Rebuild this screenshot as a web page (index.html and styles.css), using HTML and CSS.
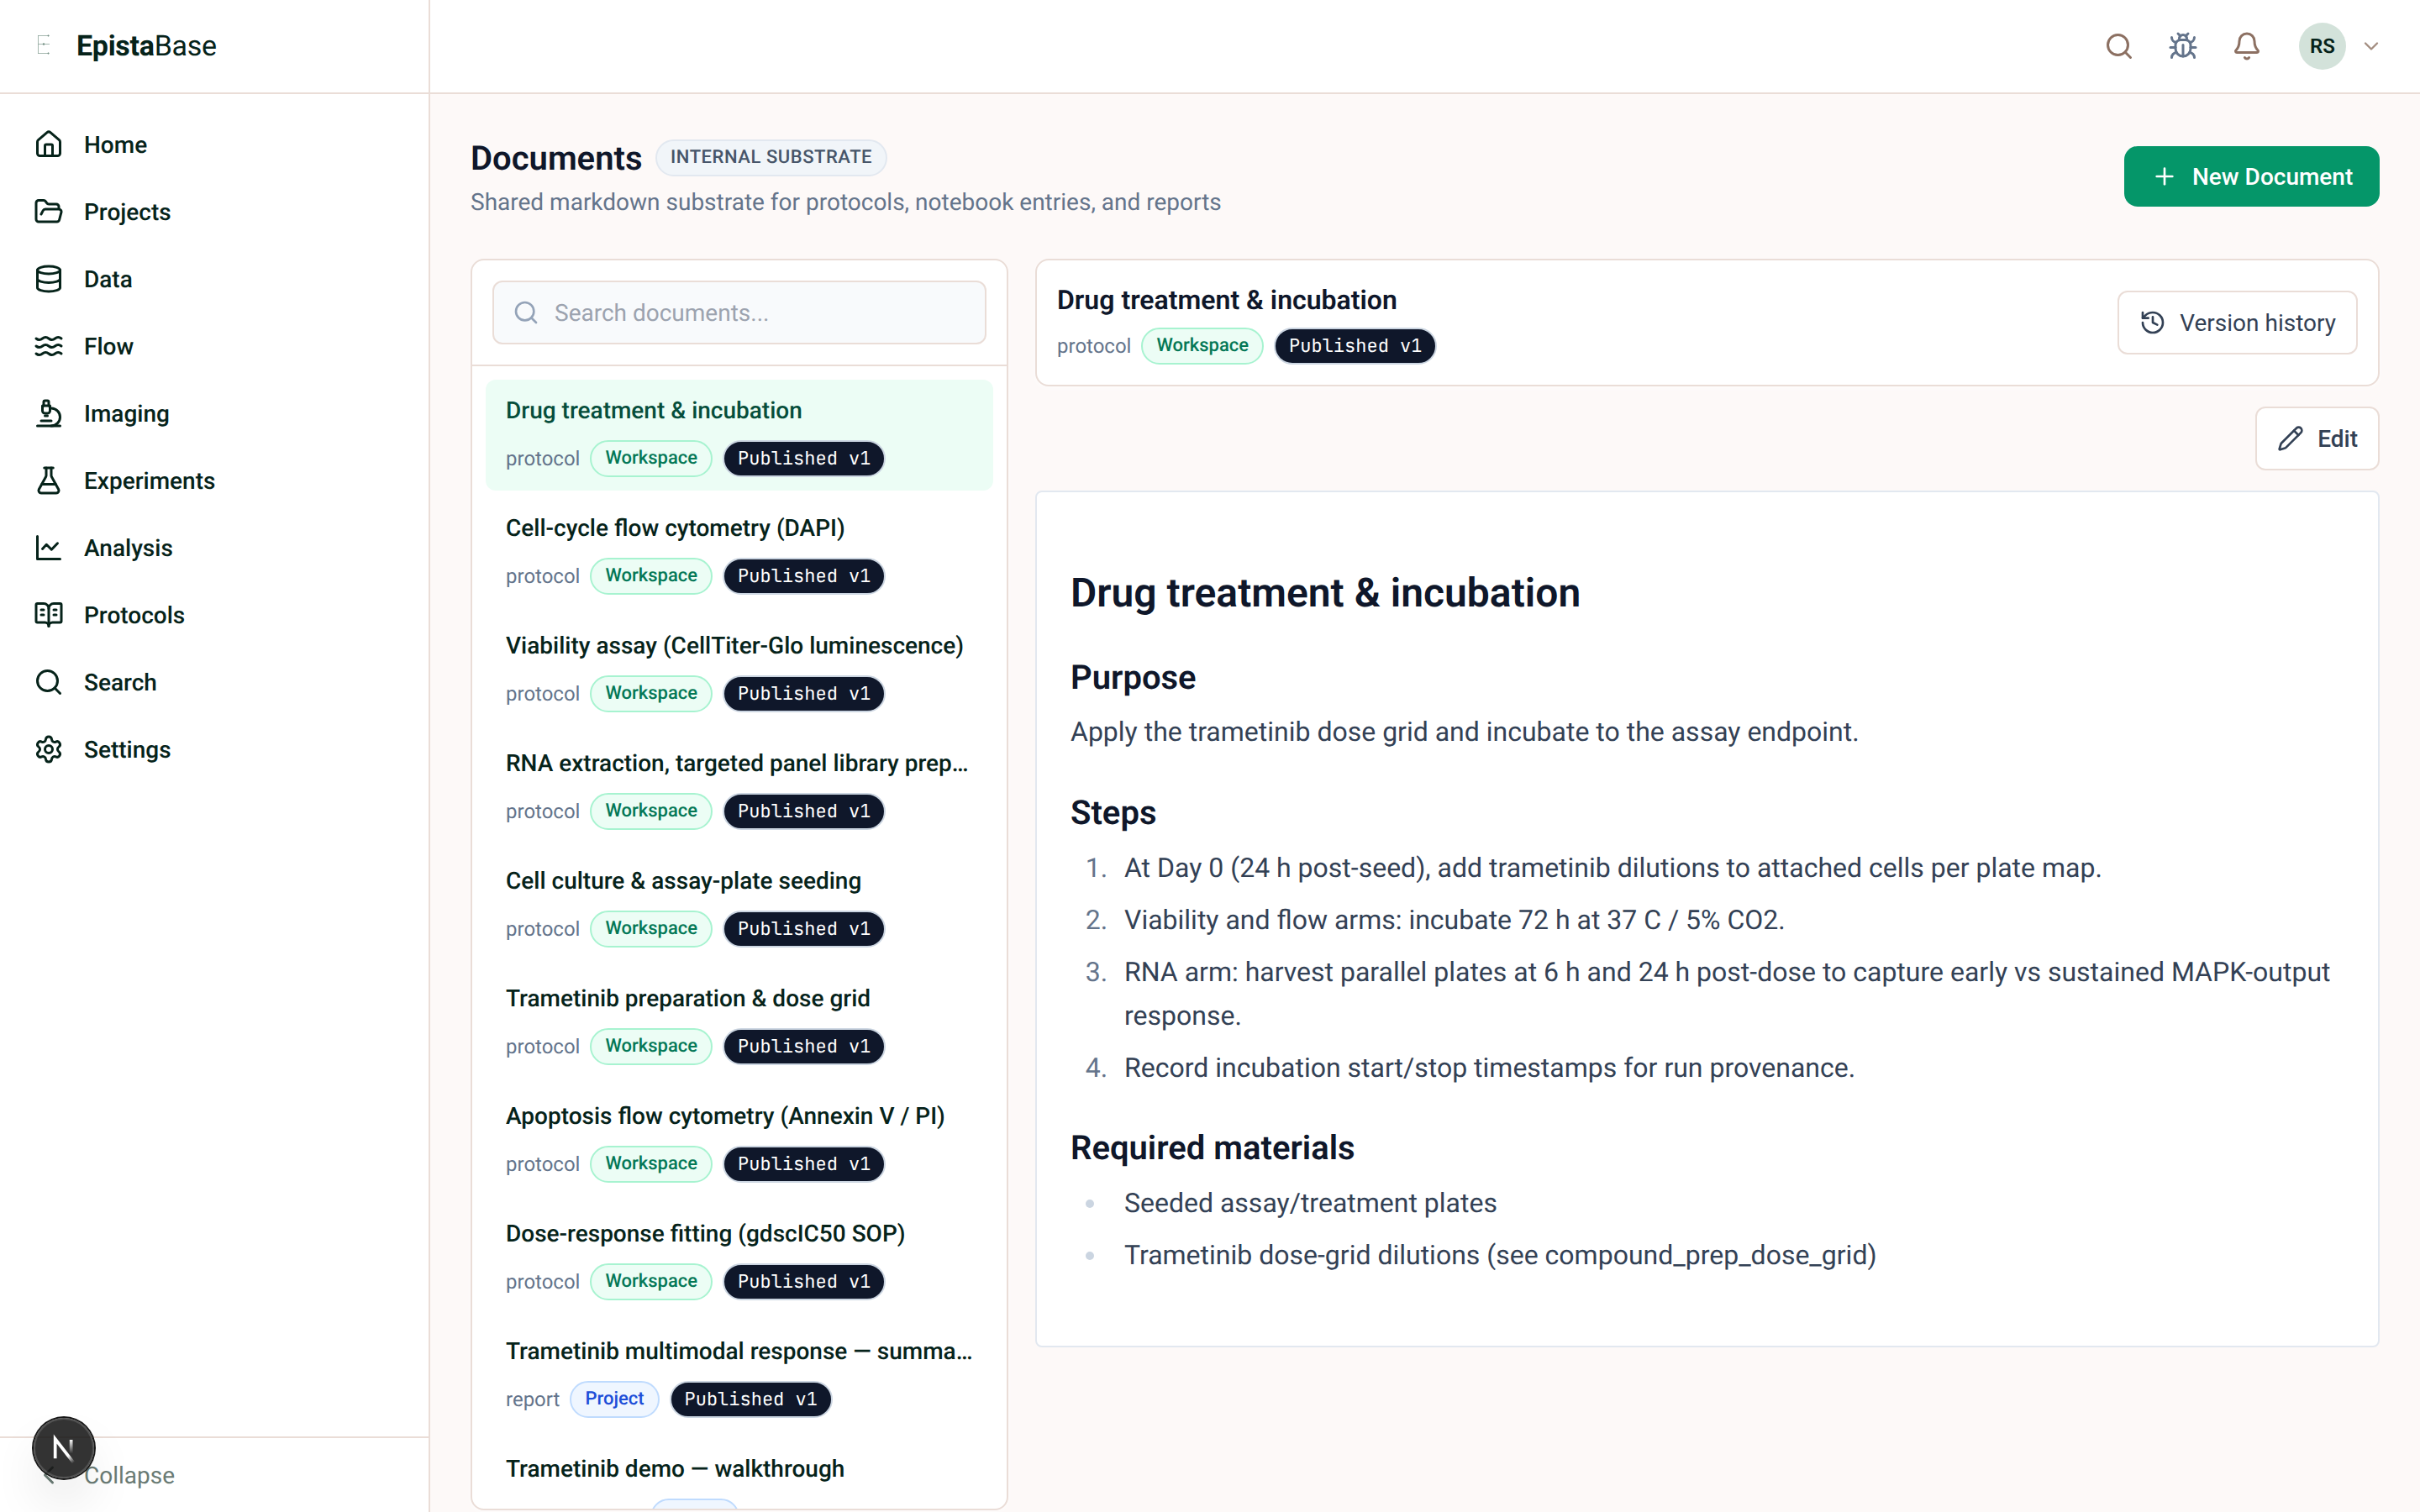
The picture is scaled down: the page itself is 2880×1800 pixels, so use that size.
FILE: index.html
```html
<!DOCTYPE html>
<html lang="en">
<head>
    <meta charset="UTF-8">
    <meta name="viewport" content="width=device-width, initial-scale=1.0">
    <title>Documents - EpistaBase</title>
    <link rel="stylesheet" href="styles.css">
</head>
<body>
    <!-- Shared icon shapes -->
    <svg class="sprite" xmlns="http://www.w3.org/2000/svg">
        <symbol id="i-search" viewBox="0 0 24 24"><circle cx="11" cy="11" r="8"/><path d="m21 21-4.3-4.3"/></symbol>
    </svg>

    <aside id="sidebar">
        <div class="brand">
            <svg class="brand-mark" viewBox="0 0 16 24">
                <path d="M1.5 1v22M1 1.5h13M1 11.5h14M1 22.5h13"/>
                <circle cx="8" cy="11.5" r="1"/><circle cx="13.5" cy="1.5" r=".8"/><circle cx="13.5" cy="22.5" r=".8"/>
            </svg>
            <span class="brand-name"><strong>Epista</strong>Base</span>
        </div>
        <nav class="nav">
            <a class="nav-item"><svg class="icon" viewBox="0 0 24 24"><path d="M15 21v-8a1 1 0 0 0-1-1h-4a1 1 0 0 0-1 1v8"/><path d="M3 10a2 2 0 0 1 .709-1.528l7-5.999a2 2 0 0 1 2.582 0l7 5.999A2 2 0 0 1 21 10v9a2 2 0 0 1-2 2H5a2 2 0 0 1-2-2z"/></svg>Home</a>
            <a class="nav-item"><svg class="icon" viewBox="0 0 24 24"><path d="m6 14 1.5-2.9A2 2 0 0 1 9.24 10H20a2 2 0 0 1 1.94 2.5l-1.54 6a2 2 0 0 1-1.95 1.5H4a2 2 0 0 1-2-2V5a2 2 0 0 1 2-2h3.9a2 2 0 0 1 1.69.9l.81 1.2a2 2 0 0 0 1.67.9H18a2 2 0 0 1 2 2v2"/></svg>Projects</a>
            <a class="nav-item"><svg class="icon" viewBox="0 0 24 24"><ellipse cx="12" cy="5" rx="9" ry="3"/><path d="M3 5v14a9 3 0 0 0 18 0V5"/><path d="M3 12a9 3 0 0 0 18 0"/></svg>Data</a>
            <a class="nav-item"><svg class="icon" viewBox="0 0 24 24"><path d="M2 6c.6.5 1.2 1 2.5 1C7 7 7 5 9.5 5c2.6 0 2.4 2 5 2 2.5 0 2.5-2 5-2 1.3 0 1.9.5 2.5 1"/><path d="M2 12c.6.5 1.2 1 2.5 1 2.5 0 2.5-2 5-2 2.6 0 2.4 2 5 2 2.5 0 2.5-2 5-2 1.3 0 1.9.5 2.5 1"/><path d="M2 18c.6.5 1.2 1 2.5 1 2.5 0 2.5-2 5-2 2.6 0 2.4 2 5 2 2.5 0 2.5-2 5-2 1.3 0 1.9.5 2.5 1"/></svg>Flow</a>
            <a class="nav-item"><svg class="icon" viewBox="0 0 24 24"><path d="M6 18h8"/><path d="M3 22h18"/><path d="M14 22a7 7 0 1 0 0-14h-1"/><path d="M9 14h2"/><path d="M9 12a2 2 0 0 1-2-2V6h6v4a2 2 0 0 1-2 2Z"/><path d="M12 6V3a1 1 0 0 0-1-1H9a1 1 0 0 0-1 1v3"/></svg>Imaging</a>
            <a class="nav-item"><svg class="icon" viewBox="0 0 24 24"><path d="M14 2v6a2 2 0 0 0 .245.96l5.51 10.08A2 2 0 0 1 18 22H6a2 2 0 0 1-1.755-2.96l5.51-10.08A2 2 0 0 0 10 8V2"/><path d="M6.453 15h11.094"/><path d="M8.5 2h7"/></svg>Experiments</a>
            <a class="nav-item"><svg class="icon" viewBox="0 0 24 24"><path d="M3 3v18h18"/><path d="m7 13 3.2-3.5 4 4L19 8.5"/></svg>Analysis</a>
            <a class="nav-item"><svg class="icon" viewBox="0 0 24 24"><path d="M12 7v14"/><path d="M16 12h2"/><path d="M16 8h2"/><path d="M3 18a1 1 0 0 1-1-1V4a1 1 0 0 1 1-1h5a4 4 0 0 1 4 4 4 4 0 0 1 4-4h5a1 1 0 0 1 1 1v13a1 1 0 0 1-1 1h-6a3 3 0 0 0-3 3 3 3 0 0 0-3-3z"/><path d="M6 12h2"/><path d="M6 8h2"/></svg>Protocols</a>
            <a class="nav-item"><svg class="icon"><use href="#i-search"/></svg>Search</a>
            <a class="nav-item"><svg class="icon" viewBox="0 0 24 24"><path d="M9.671 4.136a2.34 2.34 0 0 1 4.659 0 2.34 2.34 0 0 0 3.319 1.915 2.34 2.34 0 0 1 2.33 4.033 2.34 2.34 0 0 0 0 3.831 2.34 2.34 0 0 1-2.33 4.033 2.34 2.34 0 0 0-3.319 1.915 2.34 2.34 0 0 1-4.659 0 2.34 2.34 0 0 0-3.32-1.915 2.34 2.34 0 0 1-2.33-4.033 2.34 2.34 0 0 0 0-3.831A2.34 2.34 0 0 1 6.35 6.051a2.34 2.34 0 0 0 3.319-1.915"/><circle cx="12" cy="12" r="3"/></svg>Settings</a>
        </nav>
        <div class="collapse"><svg class="icon" viewBox="0 0 24 24"><path d="m15 18-6-6 6-6"/></svg>Collapse</div>
    </aside>

    <div id="page">
        <header class="topbar">
            <svg class="icon" viewBox="0 0 24 24"><use href="#i-search"/></svg>
            <svg class="icon icon-bug" viewBox="0 0 24 24"><path d="m8 2 1.88 1.88"/><path d="M14.12 3.88 16 2"/><path d="M9 7.13v-1a3.003 3.003 0 1 1 6 0v1"/><path d="M12 20c-3.3 0-6-2.7-6-6v-3a4 4 0 0 1 4-4h4a4 4 0 0 1 4 4v3c0 3.3-2.7 6-6 6"/><path d="M12 20v-9"/><path d="M6.53 9C4.6 8.8 3 7.1 3 5"/><path d="M6 13H2"/><path d="M3 21c0-2.1 1.7-3.9 3.8-4"/><path d="M20.97 5c0 2.1-1.6 3.8-3.5 4"/><path d="M22 13h-4"/><path d="M17.2 17c2.1.1 3.8 1.9 3.8 4"/></svg>
            <svg class="icon" viewBox="0 0 24 24"><path d="M10.268 21a2 2 0 0 0 3.464 0"/><path d="M3.262 15.326A1 1 0 0 0 4 17h16a1 1 0 0 0 .74-1.673C19.41 13.956 18 12.499 18 8A6 6 0 0 0 6 8c0 4.499-1.411 5.956-2.738 7.326"/></svg>
            <div class="user">
                <span class="avatar">RS</span>
                <svg class="icon icon-chevron" viewBox="0 0 24 24"><path d="m6 9 6 6 6-6"/></svg>
            </div>
        </header>

        <main class="content">
            <div class="page-head">
                <div>
                    <div class="page-title"><h1>Documents</h1><span class="badge badge-tag">Internal substrate</span></div>
                    <p class="subtitle">Shared markdown substrate for protocols, notebook entries, and reports</p>
                </div>
                <button class="btn btn-primary"><svg class="icon" viewBox="0 0 24 24"><path d="M5 12h14"/><path d="M12 5v14"/></svg>New Document</button>
            </div>

            <div class="columns">
                <section class="doc-list">
                    <div class="search-wrap">
                        <div class="search"><svg class="icon"><use href="#i-search"/></svg>Search documents...</div>
                    </div>
                    <div class="items">
                        <div class="item active">
                            <div class="item-title">Drug treatment &amp; incubation</div>
                            <div class="meta">protocol<span class="badge badge-workspace">Workspace</span><span class="badge badge-published">Published v1</span></div>
                        </div>
                        <div class="item">
                            <div class="item-title">Cell-cycle flow cytometry (DAPI)</div>
                            <div class="meta">protocol<span class="badge badge-workspace">Workspace</span><span class="badge badge-published">Published v1</span></div>
                        </div>
                        <div class="item">
                            <div class="item-title">Viability assay (CellTiter-Glo luminescence)</div>
                            <div class="meta">protocol<span class="badge badge-workspace">Workspace</span><span class="badge badge-published">Published v1</span></div>
                        </div>
                        <div class="item">
                            <div class="item-title">RNA extraction, targeted panel library prep &amp; sequencing</div>
                            <div class="meta">protocol<span class="badge badge-workspace">Workspace</span><span class="badge badge-published">Published v1</span></div>
                        </div>
                        <div class="item">
                            <div class="item-title">Cell culture &amp; assay-plate seeding</div>
                            <div class="meta">protocol<span class="badge badge-workspace">Workspace</span><span class="badge badge-published">Published v1</span></div>
                        </div>
                        <div class="item">
                            <div class="item-title">Trametinib preparation &amp; dose grid</div>
                            <div class="meta">protocol<span class="badge badge-workspace">Workspace</span><span class="badge badge-published">Published v1</span></div>
                        </div>
                        <div class="item">
                            <div class="item-title">Apoptosis flow cytometry (Annexin V / PI)</div>
                            <div class="meta">protocol<span class="badge badge-workspace">Workspace</span><span class="badge badge-published">Published v1</span></div>
                        </div>
                        <div class="item">
                            <div class="item-title">Dose-response fitting (gdscIC50 SOP)</div>
                            <div class="meta">protocol<span class="badge badge-workspace">Workspace</span><span class="badge badge-published">Published v1</span></div>
                        </div>
                        <div class="item">
                            <div class="item-title">Trametinib multimodal response — summary report</div>
                            <div class="meta">report<span class="badge badge-project">Project</span><span class="badge badge-published">Published v1</span></div>
                        </div>
                        <div class="item">
                            <div class="item-title">Trametinib demo — walkthrough</div>
                            <div class="meta">notebook entry<span class="badge badge-project">Project</span></div>
                        </div>
                    </div>
                </section>

                <section class="doc-view">
                    <div class="doc-head">
                        <div>
                            <h2>Drug treatment &amp; incubation</h2>
                            <div class="meta">protocol<span class="badge badge-workspace">Workspace</span><span class="badge badge-published">Published v1</span></div>
                        </div>
                        <button class="btn btn-outline"><svg class="icon" viewBox="0 0 24 24"><path d="M3 12a9 9 0 1 0 9-9 9.75 9.75 0 0 0-6.74 2.74L3 8"/><path d="M3 3v5h5"/><path d="M12 7v5l4 2"/></svg>Version history</button>
                    </div>
                    <button class="btn btn-outline btn-edit"><svg class="icon" viewBox="0 0 24 24"><path d="M21.174 6.812a1 1 0 0 0-3.986-3.987L3.842 16.174a2 2 0 0 0-.5.83l-1.321 4.352a.5.5 0 0 0 .623.622l4.353-1.32a2 2 0 0 0 .83-.497z"/><path d="m15 5 4 4"/></svg>Edit</button>
                    <article class="prose">
                        <h1>Drug treatment &amp; incubation</h1>
                        <h2>Purpose</h2>
                        <p>Apply the trametinib dose grid and incubate to the assay endpoint.</p>
                        <h2>Steps</h2>
                        <ol>
                            <li>At Day 0 (24 h post-seed), add trametinib dilutions to attached cells per plate map.</li>
                            <li>Viability and flow arms: incubate 72 h at 37 C / 5% CO2.</li>
                            <li>RNA arm: harvest parallel plates at 6 h and 24 h post-dose to capture early vs sustained MAPK-output response.</li>
                            <li>Record incubation start/stop timestamps for run provenance.</li>
                        </ol>
                        <h2>Required materials</h2>
                        <ul>
                            <li>Seeded assay/treatment plates</li>
                            <li>Trametinib dose-grid dilutions (see compound_prep_dose_grid)</li>
                        </ul>
                    </article>
                </section>
            </div>
        </main>
    </div>

    <!-- Floating dev tools button -->
    <div class="dev-badge">
        <svg viewBox="0 0 16 16" fill="none">
            <path d="M13.3 15.2 2.34 1v11.6" stroke="url(#n-diag)" stroke-width="1.86"/>
            <path d="M11.825 1.5v11.6" stroke="url(#n-bar)" stroke-width="1.86"/>
            <defs>
                <linearGradient id="n-diag" x1="9.96" y1="11.12" x2="15.48" y2="17.97" gradientUnits="userSpaceOnUse"><stop stop-color="#fff"/><stop offset=".604" stop-color="#fff" stop-opacity="0"/></linearGradient>
                <linearGradient id="n-bar" x1="11.82" y1="1.4" x2="11.79" y2="9.63" gradientUnits="userSpaceOnUse"><stop stop-color="#fff"/><stop offset="1" stop-color="#fff" stop-opacity="0"/></linearGradient>
            </defs>
        </svg>
    </div>
</body>
</html>
```

FILE: styles.css
```css
:root {
    --ink: #06231a;
    --border: #eaddd7;
    --border-cool: #e2e8f0;
    --page-bg: #fdf9f8;
    --brown: #8c7062;
    --slate-900: #0f172a;
    --slate-700: #334155;
    --slate-500: #64748b;
    --green: #059669;
}

* {
    box-sizing: border-box;
}

body {
    margin: 0;
    width: 100vw;
    height: 100vh;
    display: flex;
    overflow: hidden;
    font-family: Roboto, "Liberation Sans", sans-serif;
    font-size: 28px;
    line-height: 41px;
    text-rendering: geometricPrecision;
    background: var(--page-bg);
    color: var(--ink);
}

h1, h2, p {
    margin: 0;
}

.sprite {
    display: none;
}

.icon {
    width: 36px;
    height: 36px;
    flex-shrink: 0;
    fill: none;
    stroke: currentColor;
    stroke-width: 2;
    stroke-linecap: round;
    stroke-linejoin: round;
}

/* --- Sidebar --- */
#sidebar {
    width: 512px;
    flex-shrink: 0;
    display: flex;
    flex-direction: column;
    background: #fff;
    border-right: 2px solid var(--border);
}

.brand {
    height: 112px;
    display: flex;
    align-items: center;
    padding-left: 44px;
    border-bottom: 2px solid var(--border);
}

.brand-mark {
    width: 16px;
    height: 24px;
    margin-right: 31px;
    margin-bottom: 4px;
    fill: #5d7d70;
    stroke: #8fa69c;
    stroke-width: .8;
}

.brand-name {
    font-size: 34px;
    letter-spacing: -0.3px;
}

.brand-name strong {
    font-weight: 700;
}

.nav {
    flex: 1;
    display: flex;
    flex-direction: column;
    gap: 8px;
    padding: 24px 16px;
}

.nav-item {
    height: 72px;
    display: flex;
    align-items: center;
    gap: 24px;
    padding: 0 24px;
    font-weight: 500;
}

.collapse {
    height: 90px;
    display: flex;
    align-items: center;
    gap: 24px;
    padding: 0 40px;
    border-top: 2px solid var(--border);
    color: #6a7b74;
}

/* --- Top bar --- */
#page {
    flex: 1;
    min-width: 0;
    display: flex;
    flex-direction: column;
}

.topbar {
    height: 112px;
    flex-shrink: 0;
    display: flex;
    align-items: center;
    justify-content: flex-end;
    gap: 40px;
    padding-right: 44px;
    background: #fff;
    border-bottom: 2px solid var(--border);
    color: var(--brown);
}

.icon-bug {
    color: var(--slate-500);
}

.user {
    display: flex;
    align-items: center;
    gap: 16px;
    margin-left: 4px;
}

.avatar {
    width: 56px;
    height: 56px;
    border-radius: 50%;
    background: #d3e2da;
    color: var(--ink);
    font-size: 24px;
    font-weight: 600;
    line-height: 57px;
    text-align: center;
}

.icon-chevron {
    width: 28px;
    height: 28px;
    color: #a38d80;
}

/* --- Page head --- */
.content {
    flex: 1;
    min-height: 0;
    display: flex;
    flex-direction: column;
    padding: 48px 48px 2px;
}

.page-head {
    height: 148px;
    display: flex;
    justify-content: space-between;
    align-items: flex-start;
}

.page-title {
    display: flex;
    align-items: center;
    gap: 15.5px;
    height: 56px;
}

.page-title h1 {
    padding-top: 2px;
    font-size: 40px;
    font-weight: 600;
    line-height: 56px;
    color: var(--slate-900);
}

.subtitle {
    margin-top: 4px;
    color: var(--slate-500);
}

.badge {
    height: 44px;
    padding: 0 16px;
    border: 2px solid;
    border-radius: 22px;
    font-size: 22px;
    font-weight: 500;
    line-height: 39px;
}

.badge-tag {
    background: #f1f5f9;
    border-color: var(--border-cool);
    color: #475569;
    letter-spacing: 0.55px;
    text-transform: uppercase;
}

.badge-workspace {
    background: #ecfdf5;
    border-color: #a7f3d0;
    color: #047857;
}

.badge-project {
    background: #eff6ff;
    border-color: #bfdbfe;
    color: #1d4ed8;
}

.badge-published {
    background: var(--slate-900);
    border-color: #cbd5e1;
    color: #fff;
    font-family: "JetBrains Mono", "Roboto Mono", "DejaVu Sans Mono", monospace;
    font-weight: 400;
    line-height: 40px;
}

.btn {
    display: flex;
    align-items: center;
    gap: 16px;
    border: 0;
    font: inherit;
}

.btn .icon {
    width: 32px;
    height: 32px;
}

.btn-primary {
    width: 304px;
    height: 72px;
    margin-top: 14px;
    gap: 17px;
    padding: 0 0 0 32px;
    border-radius: 16px;
    background: var(--green);
    color: #fff;
    font-weight: 500;
    white-space: nowrap;
}

.btn-outline {
    height: 76px;
    padding: 0 24px;
    border: 2px solid var(--border);
    border-radius: 12px;
    background: #fff;
    color: var(--slate-700);
}

/* --- Document list --- */
.columns {
    flex: 1;
    min-height: 0;
    display: flex;
    gap: 32px;
}

.doc-list {
    width: 640px;
    flex-shrink: 0;
    overflow: hidden;
    background: #fff;
    border: 2px solid var(--border);
    border-radius: 16px;
}

.doc-list,
.doc-head {
    box-shadow: 0 2px 6px rgba(255, 255, 255, 0.6);
}

.search-wrap {
    padding: 24px;
    border-bottom: 2px solid var(--border);
}

.search {
    height: 76px;
    display: flex;
    align-items: center;
    gap: 18px;
    padding: 0 22px;
    border: 2px solid var(--border);
    border-radius: 12px;
    background: #f8fafc;
    color: #9ca3af;
}

.search .icon {
    width: 32px;
    height: 32px;
    color: #94a3b8;
}

.items {
    display: flex;
    flex-direction: column;
    gap: 8px;
    padding: 16px;
}

.item {
    padding: 16px 24px;
    border-radius: 12px;
}

.item.active {
    background: #ecfdf5;
}

.item-title {
    margin-bottom: 15px;
    font-weight: 500;
    white-space: nowrap;
    overflow: hidden;
    text-overflow: ellipsis;
}

.item.active .item-title {
    color: #064e3b;
}

.meta {
    display: flex;
    align-items: center;
    gap: 12px;
    color: var(--slate-500);
    font-size: 24px;
}

/* --- Document view --- */
.doc-view {
    flex: 1;
    min-width: 0;
    display: flex;
    flex-direction: column;
}

.doc-head {
    height: 152px;
    display: flex;
    justify-content: space-between;
    align-items: center;
    padding: 0 24px;
    background: #fff;
    border: 2px solid var(--border);
    border-radius: 16px;
}

.doc-head h2 {
    margin-bottom: 10px;
    font-size: 32px;
    font-weight: 600;
    line-height: 46px;
    color: var(--slate-900);
}

.btn-edit {
    align-self: flex-end;
    margin: 24px 0;
    font-weight: 500;
}

.prose {
    height: 1020px;
    flex-shrink: 0;
    padding: 90px 40px 0;
    background: #fff;
    border: 2px solid var(--border-cool);
    border-radius: 8px;
    color: var(--slate-700);
    font-size: 32px;
    line-height: 52px;
}

.prose h1 {
    font-size: 48px;
    font-weight: 600;
    line-height: 60px;
    color: var(--slate-900);
}

.prose h2 {
    margin: 45px 0 12px;
    font-size: 40px;
    font-weight: 600;
    line-height: 52px;
    color: var(--slate-900);
}

.prose ol,
.prose ul {
    margin: 0;
    padding: 1px 0 0 52px;
}

.prose ol {
    margin-bottom: -1px;
}

.prose li {
    margin-bottom: 10px;
    padding-left: 12px;
}

/* bullets sit a little further out than the numbers */
.prose ul {
    padding-left: 45px;
}

.prose ul li {
    padding-left: 19px;
}

.prose ol li::marker {
    color: var(--slate-500);
}

.prose ul li::marker {
    color: #cbd5e1;
}

/* --- Dev tools button, floats over the sidebar --- */
.dev-badge {
    position: fixed;
    left: 40px;
    bottom: 40px;
    width: 72px;
    height: 72px;
    border-radius: 50%;
    background: rgba(0, 0, 0, 0.8);
    backdrop-filter: blur(48px);
    box-shadow: 0 0 0 2px #171717, inset 0 0 0 2px rgba(255, 255, 255, 0.14), 0 32px 64px -16px rgba(0, 0, 0, 0.24);
}

.dev-badge svg {
    width: 32px;
    height: 32px;
    margin: 23px 0 0 21px;
    overflow: visible;
}
```
